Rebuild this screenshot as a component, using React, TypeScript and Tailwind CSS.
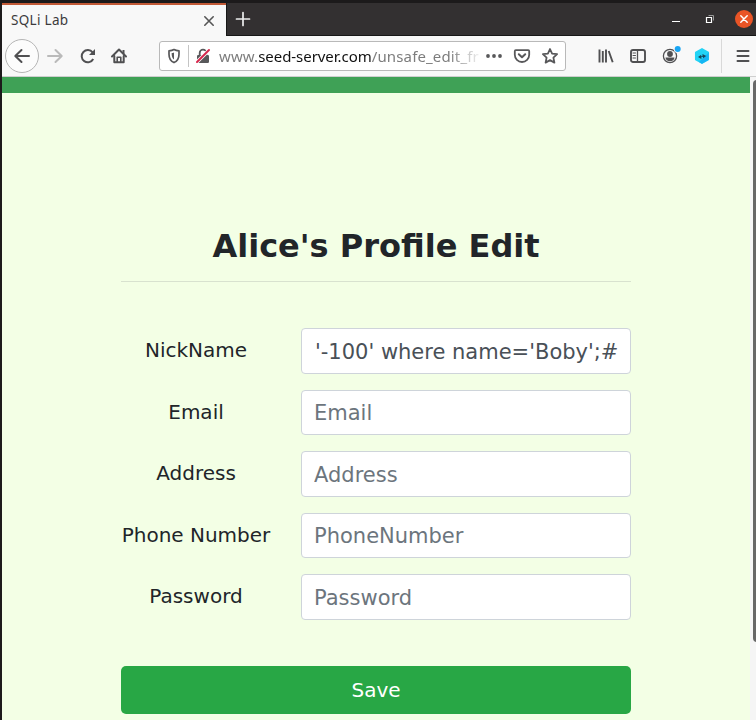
import React from "react";

type IconProps = { className?: string; size?: string; box?: string; children: React.ReactNode };

function Icon({ className = "", size = "size-4", box = "0 0 16 16", children }: IconProps) {
  return (
    <svg
      viewBox={box}
      className={`block shrink-0 overflow-visible ${size} ${className}`}
      fill="none"
      stroke="currentColor"
      strokeWidth="2"
      strokeLinecap="round"
      strokeLinejoin="round"
    >
      {children}
    </svg>
  );
}

function TitleBar() {
  return (
    <div className="flex h-[33px] shrink-0 bg-[#333031]">
      <div className="flex w-[224px] items-center border-t-2 border-[#c25a37] bg-[#f8f8f8] pl-[9px] pr-[12px] text-[#3c3b3c]">
        <span className="text-[13.5px] leading-none whitespace-nowrap tracking-[0.3px]">SQLi Lab</span>
        <Icon className="mt-px ml-auto text-[#555]" size="size-[10px]" box="0 0 10 10">
          <path d="M.8.8l8.400 8.400M9.200.8L.8 9.200" strokeWidth="1.6" />
        </Icon>
      </div>
      <div className="flex flex-1 items-center border-b border-l border-[#171717] text-white">
        <Icon className="ml-[9px] text-[#eee]" size="size-[14px]" box="0 0 14 14">
          <path d="M7 .5v13M.5 7h13" strokeWidth="1.7" />
        </Icon>
        <Icon className="ml-auto" size="size-2" box="0 0 8 8">
          <path d="M0 6.5h8" strokeWidth="1" strokeLinecap="butt" />
        </Icon>
        <Icon className="ml-[26px]" size="size-2" box="0 0 8 8">
          <path d="M.5 2.500h5v5h-5z" strokeWidth="1.2" strokeLinejoin="miter" />
          <path d="M2.500.5h5v5" stroke="#999" strokeWidth="1" strokeLinejoin="miter" strokeLinecap="butt" />
        </Icon>
        <span className="ml-[21px] mr-[3px] flex size-[18px] items-center justify-center rounded-full bg-[#e95426]">
          <Icon size="size-2" box="0 0 8 8">
            <path d="M.8.8l6.400 6.400M7.200.8L.8 7.200" strokeWidth="1.5" />
          </Icon>
        </span>
      </div>
    </div>
  );
}

function AddressBar() {
  return (
    <div className="ml-[32px] flex h-[30px] w-[407px] shrink-0 items-center rounded-[3px] border border-[#b9b9b9] bg-white text-[#58585a]">
      <Icon className="ml-[6px]">
        <path d="M8 1.600c1.700.9 3.300 1.100 5 1.200v3.400c0 4-1.700 6.900-5 8.400-3.300-1.500-5-4.400-5-8.400V2.800c1.700-.1 3.300-.3 5-1.200z" strokeWidth="1.7" />
        <path d="M8 4.400v7.200C6.400 10.400 5.700 8.500 5.700 6.300V5c.8-.1 1.500-.3 2.300-.6z" fill="currentColor" stroke="none" />
      </Icon>
      <span className="ml-[6px] h-[22px] w-px bg-[#c4c4c4]" />
      <Icon className="ml-[6px]">
        <path d="M4.700 8V5a3.300 3.300 0 0 1 6.600 0v3" strokeWidth="1.8" />
        <rect x="2" y="7" width="12" height="8" rx="1.200" fill="currentColor" stroke="none" />
        <path d="M1.200 14.800L14.600 1.400" stroke="#fff" strokeWidth="3.600" strokeLinecap="butt" />
        <path d="M2 14L14 2" stroke="#d7264c" strokeWidth="2" />
      </Icon>
      <div className="ml-[8px] w-[260px] shrink-0 whitespace-nowrap text-[15px] leading-[24px] text-[#7d7d7d] [mask-image:linear-gradient(to_right,black_230px,transparent_264px)]">
        <span className="tracking-[0.1px]">www.</span>
        <span className="tracking-[-0.05px] text-[#111]">seed-server.com</span>
        <span className="tracking-[0.15px]">/unsafe_edit_fr</span>
      </div>
      <Icon className="ml-[7px]">
        <g fill="currentColor" stroke="none">
          <circle cx="2" cy="8" r="1.900" />
          <circle cx="8" cy="8" r="1.900" />
          <circle cx="14" cy="8" r="1.900" />
        </g>
      </Icon>
      <Icon className="ml-[12px]">
        <path d="M1.800 2.200h12.400q1 0 1 1v3.600a7.200 7.200 0 0 1-14.400 0V3.200q0-1 1-1z" strokeWidth="1.800" />
        <path d="M4.800 6.300L8 9.300l3.200-3" strokeWidth="2" />
      </Icon>
      <Icon className="ml-[12px]">
        <path d="M8 1l2.100 4.600 5 .6-3.700 3.400 1 5L8 12.100l-4.400 2.500 1-5L.9 6.200l5-.6z" strokeWidth="1.800" />
      </Icon>
    </div>
  );
}

function Toolbar() {
  return (
    <div className="flex h-[41px] shrink-0 items-center border-b border-[#cfcfcf] bg-[#f8f8f8] text-[#505052]">
      <span className="ml-[3px] flex size-[34px] shrink-0 items-center justify-center rounded-full border border-[#b5b5b5] bg-[#fcfcfc]">
        <Icon>
          <path d="M15 8H1.500M7.500 2L1.300 8l6.200 6" />
        </Icon>
      </span>
      <Icon className="ml-[8px] text-[#bababa]">
        <path d="M1 8h13.500M8.500 2l6.200 6-6.200 6" />
      </Icon>
      <Icon className="ml-[17px]">
        <path d="M13.200 11A6.100 6.100 0 1 1 12.600 4.400" strokeLinecap="butt" />
        <path d="M15 1v6H9z" fill="currentColor" stroke="none" />
      </Icon>
      <Icon className="ml-[15px]">
        <path d="M1 8.500l7-7 7 7" />
        <path d="M3.300 8v6.200h9.400V8" />
        <path d="M6.200 14V9.300h3.600V14" strokeWidth="1.600" />
        <path d="M12.500 2v4" strokeLinecap="butt" />
      </Icon>
      <AddressBar />
      <Icon className="ml-[32px]">
        <path d="M1.500 1.500v13M4.800 3v11.500M8 1.500v13M10.700 3l4 11.200" strokeWidth="1.900" strokeLinecap="butt" />
      </Icon>
      <Icon className="ml-[16px]">
        <rect x="1" y="2" width="14" height="12" rx="2" strokeWidth="1.900" />
        <path d="M7.500 2v12" strokeWidth="1.300" />
        <path d="M3 5h2.500M3 7.500h2.500M3 10h2.500" strokeWidth="1" />
      </Icon>
      <Icon className="ml-[16px]">
        <circle cx="8" cy="8" r="6.600" strokeWidth="1.300" />
        <circle cx="8" cy="6" r="2.900" fill="currentColor" stroke="none" />
        <path d="M3.500 9.500h9c0 2.300-2 3.800-4.500 3.800s-4.500-1.500-4.500-3.800z" fill="currentColor" stroke="none" />
        <circle cx="15.700" cy="1" r="3.900" fill="#f8f8f8" stroke="none" />
        <circle cx="15.700" cy="1" r="3" fill="#18a5f3" stroke="none" />
      </Icon>
      <Icon className="ml-[16px]">
        <path d="M8 .8l6.300 3.600v7.200L8 15.200l-6.300-3.600V4.400z" fill="#22d3f5" stroke="#22d3f5" strokeWidth="1.500" />
        <path d="M14.700 4.400v7.400L8 15.700l-3-1.800z" fill="#16b5f4" stroke="none" />
        <path d="M4 9l3.200-2.300v1.500h1.300V6l3.700 2L9 10.300V8.900H7.400V11z" fill="#17465a" stroke="none" />
      </Icon>
      <span className="ml-[11px] h-[34px] w-px shrink-0 bg-[#d9d9d9]" />
      <Icon className="ml-[13px]">
        <path d="M2.500 3h11M2.500 8h11M2.500 13h11" />
      </Icon>
    </div>
  );
}

const fields = [
  { label: "NickName", value: "'-100' where name='Boby';#" },
  { label: "Email", placeholder: "Email" },
  { label: "Address", placeholder: "Address" },
  { label: "Phone Number", placeholder: "PhoneNumber" },
  { label: "Password", placeholder: "Password" },
];

function ProfileForm() {
  return (
    <form className="ml-[119px] w-[510px] pt-[133px] font-['DejaVu_Sans',sans-serif] text-[20px] text-[#212529]">
      <h1 className="text-center text-[32px] leading-[40px] font-bold">Alice's Profile Edit</h1>
      <hr className="mt-[15px] border-t border-[#d8e2cf]" />
      <div className="mt-[46px] flex flex-col gap-4">
        {fields.map((field) => (
          <label key={field.label} className="flex h-[45.5px] items-center">
            <span className="w-[150px] pb-px text-center leading-[30px] whitespace-nowrap">{field.label}</span>
            <input
              className={`ml-[30px] h-full w-[330px] rounded-[4px] border border-[#ced4da] bg-white pt-[2px] pr-[10px] text-[21px] text-[#495057] placeholder:text-[#6c757d] placeholder:opacity-100 ${field.value ? "pl-[13px]" : "pl-[12px]"}`}
              defaultValue={field.value}
              placeholder={field.placeholder}
            />
          </label>
        ))}
      </div>
      <button type="button" className="mt-[46px] h-[48px] w-full rounded-[5px] bg-[#28a745] text-[20px] text-white">
        Save
      </button>
    </form>
  );
}

export default function App() {
  return (
    <div className="flex h-[720px] w-[756px] flex-col overflow-hidden bg-[#1c1a1b] pt-[3px] pl-[2px] font-['Noto_Sans',sans-serif]">
      <TitleBar />
      <Toolbar />
      <div className="flex min-h-0 flex-1">
        <main className="w-[748px] bg-[#f3ffe5]">
          <div className="h-4 bg-[#3fa156]" />
          <ProfileForm />
        </main>
        <div className="w-[6px] overflow-hidden bg-[#f5f5f5] pt-[3px] pl-[3px]">
          <div className="h-[562px] w-[8px] rounded-[4px] bg-[#686868]" />
        </div>
      </div>
    </div>
  );
}
